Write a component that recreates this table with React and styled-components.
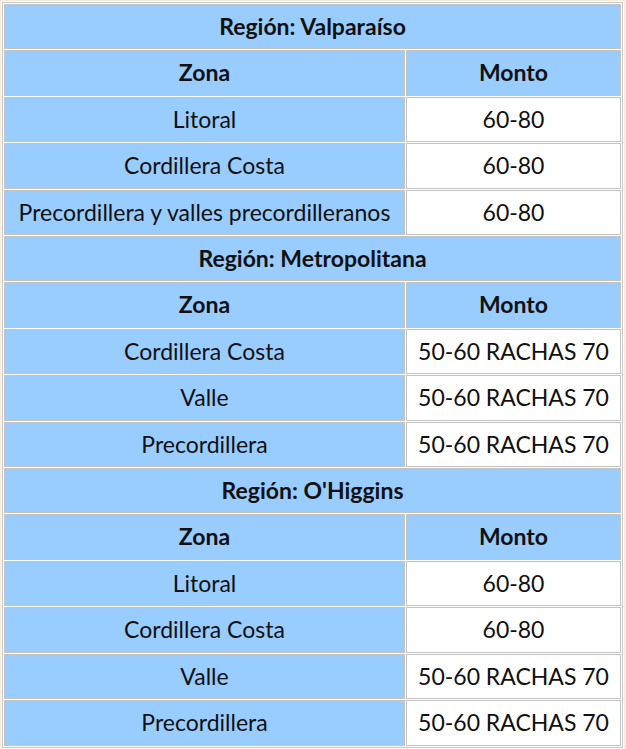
import React from "react";
import styled, { createGlobalStyle } from "styled-components";

const GlobalStyle = createGlobalStyle`
  html, body {
    margin: 0;
    padding: 0;
    background: #f9ecdf;
  }
  body {
    font-family: Lato, "Liberation Sans", sans-serif;
  }
`;

const Frame = styled.div`
  padding: 1px 0 0 1px;
`;

const Sheet = styled.div`
  display: inline-block;
  background: #ffffff;
  padding: 1px;
`;

const Table = styled.table`
  width: 621px;
  table-layout: fixed;
  border-collapse: separate;
  border-spacing: 1px;
  border: 1px solid #c9c9c9;
  background: #ffffff;
`;

const Cell = styled.td`
  box-sizing: border-box;
  border: 1px solid #c4c4c4;
  background: ${props => (props.light ? "#ffffff" : "#99ccff")};
  color: #111111;
  text-align: center;
  font-size: 23px;
  font-weight: ${props => (props.bold ? 700 : 400)};
  line-height: 23.4px;
  padding: 10px 2px;
  white-space: nowrap;
`;

const regions = [
  {
    name: "Valparaíso",
    rows: [
      ["Litoral", "60-80"],
      ["Cordillera Costa", "60-80"],
      ["Precordillera y valles precordilleranos", "60-80"]
    ]
  },
  {
    name: "Metropolitana",
    rows: [
      ["Cordillera Costa", "50-60 RACHAS 70"],
      ["Valle", "50-60 RACHAS 70"],
      ["Precordillera", "50-60 RACHAS 70"]
    ]
  },
  {
    name: "O'Higgins",
    rows: [
      ["Litoral", "60-80"],
      ["Cordillera Costa", "60-80"],
      ["Valle", "50-60 RACHAS 70"],
      ["Precordillera", "50-60 RACHAS 70"]
    ]
  }
];

export default function App() {
  return (
    <Frame>
      <GlobalStyle />
      <Sheet>
        <Table>
          <colgroup>
            <col style={{ width: 401 }} />
            <col style={{ width: 215 }} />
          </colgroup>
          <tbody>
            {regions.map(region => (
              <React.Fragment key={region.name}>
                <tr>
                  <Cell bold colSpan={2}>
                    Región: {region.name}
                  </Cell>
                </tr>
                <tr>
                  <Cell bold>Zona</Cell>
                  <Cell bold>Monto</Cell>
                </tr>
                {region.rows.map(([zona, monto], i) => (
                  <tr key={i}>
                    <Cell>{zona}</Cell>
                    <Cell light>{monto}</Cell>
                  </tr>
                ))}
              </React.Fragment>
            ))}
          </tbody>
        </Table>
      </Sheet>
    </Frame>
  );
}
